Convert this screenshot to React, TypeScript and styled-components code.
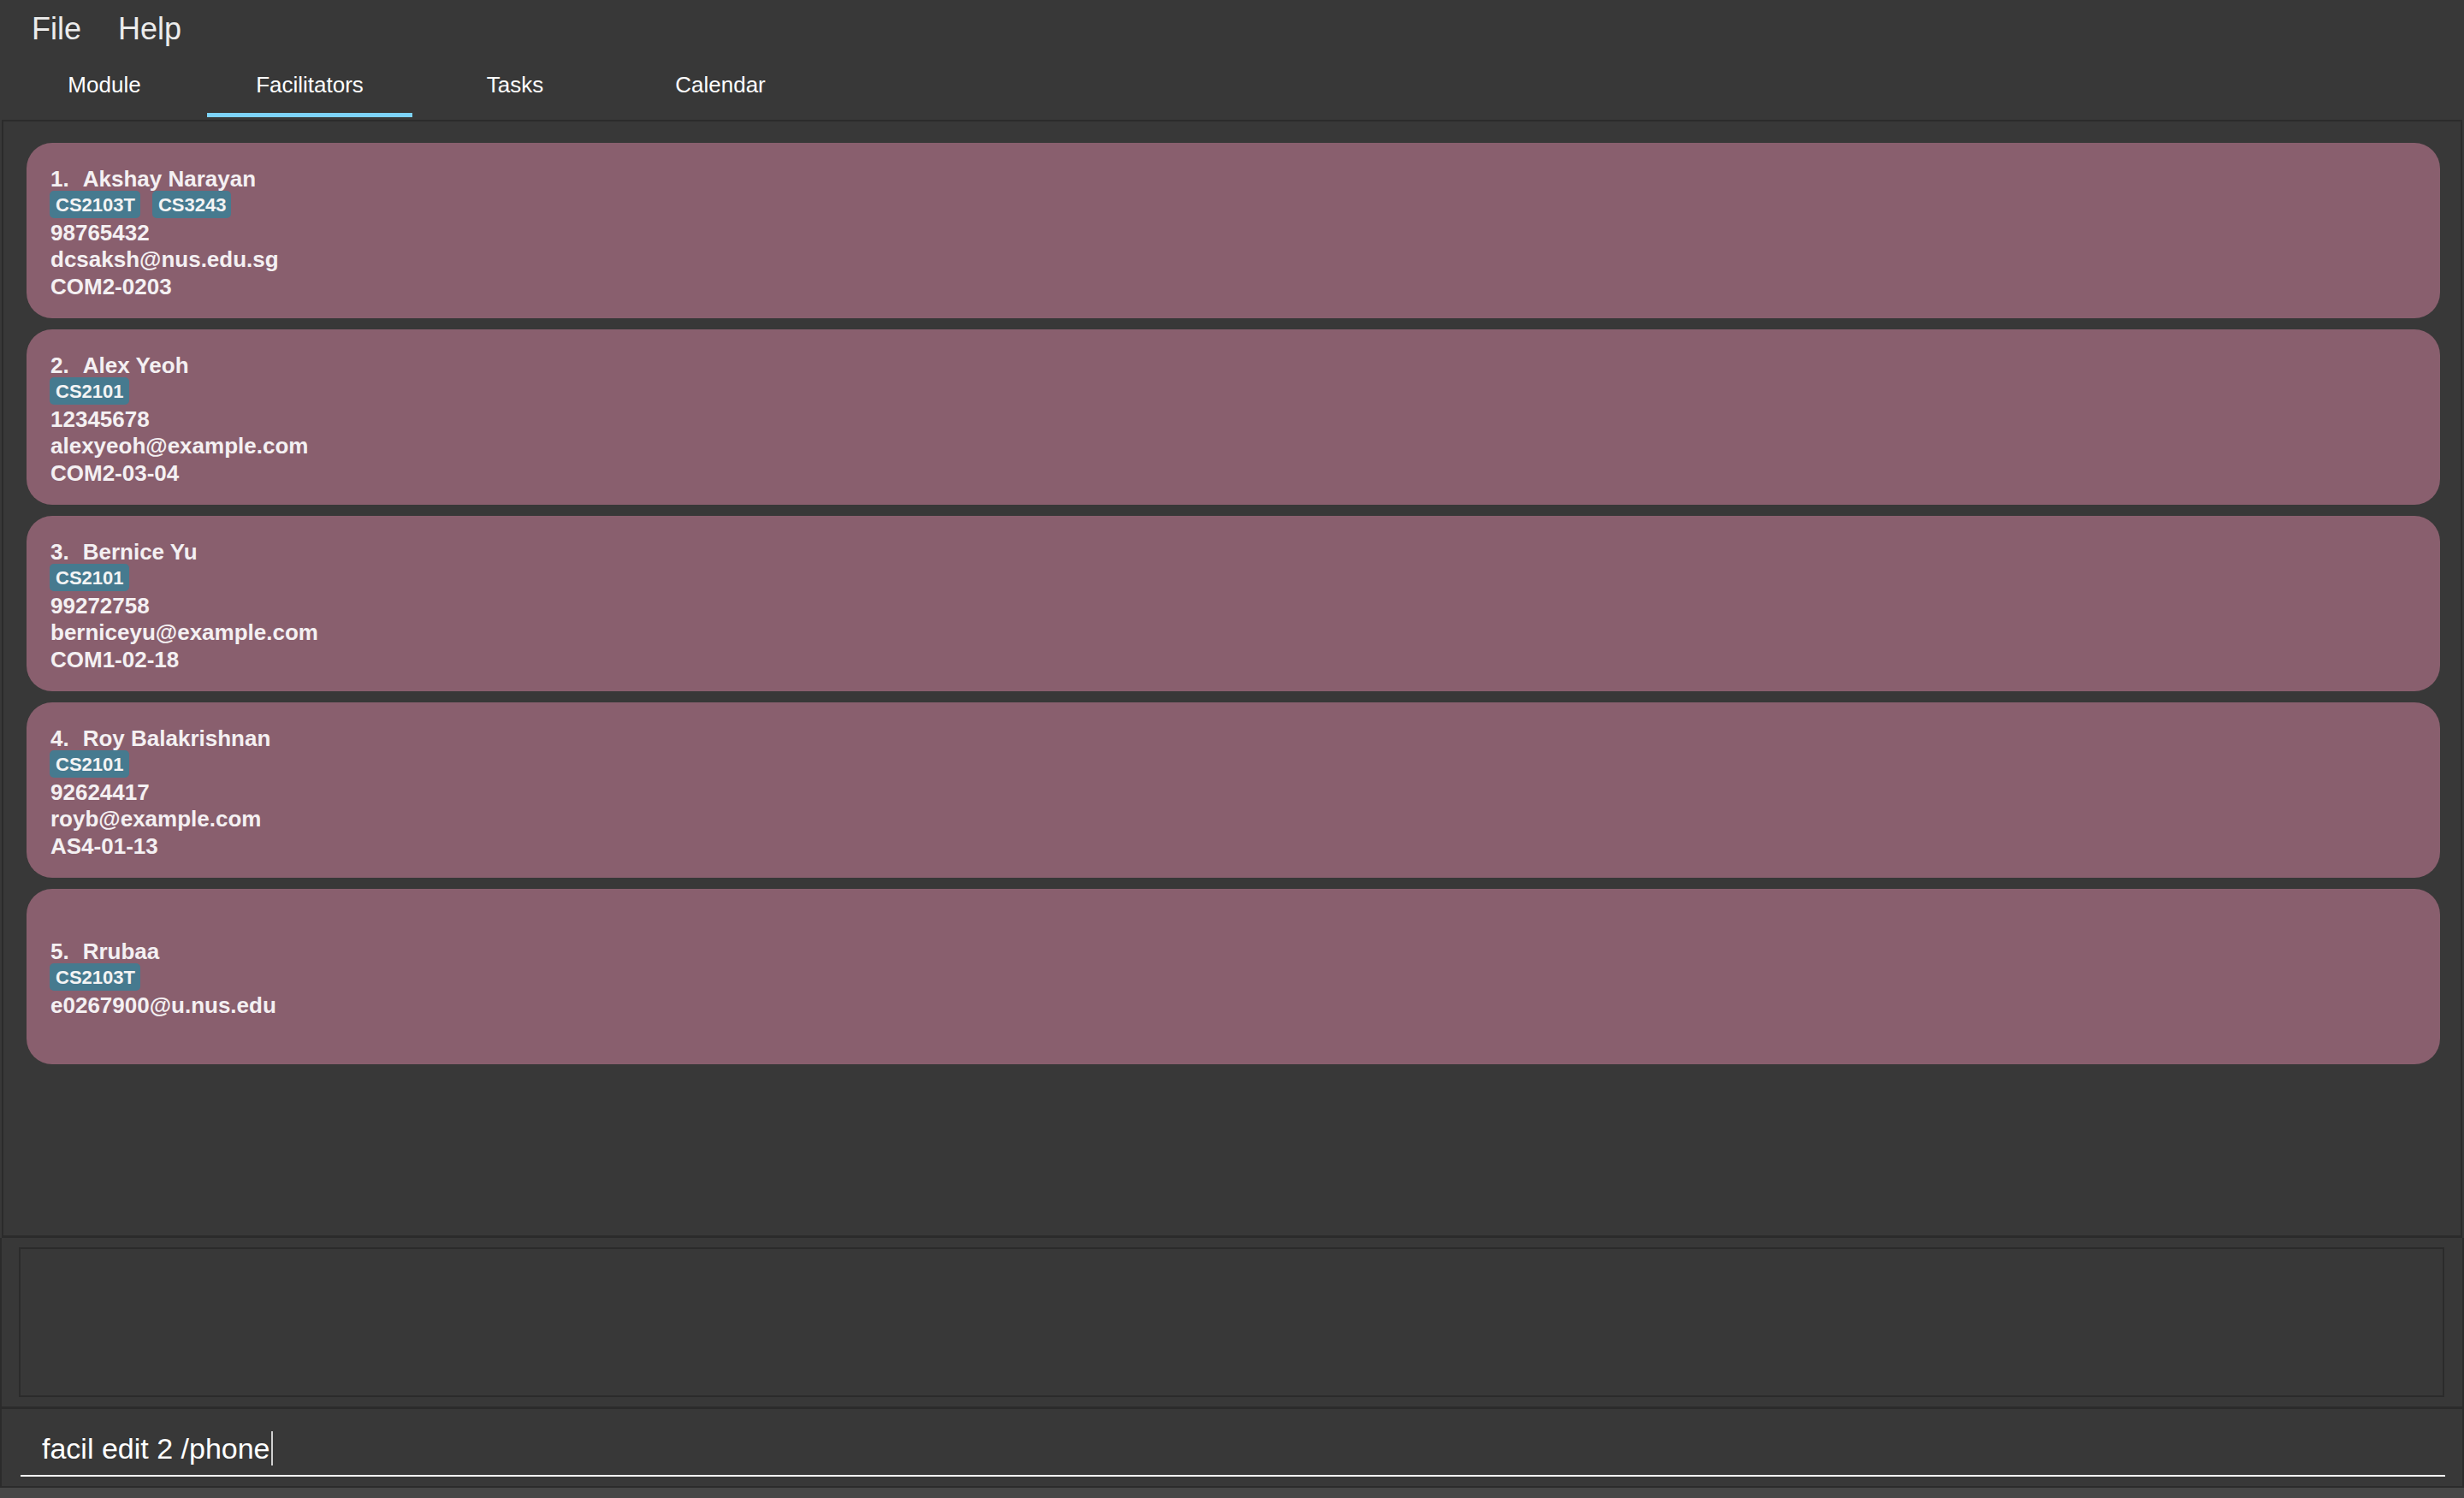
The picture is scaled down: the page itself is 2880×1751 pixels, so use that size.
import React from 'react';
import styled, { createGlobalStyle } from 'styled-components';

const GlobalStyle = createGlobalStyle`
  html, body {
    margin: 0;
    padding: 0;
    background: #383838;
  }
  body {
    font-family: "Liberation Sans", Arial, sans-serif;
  }
  * {
    box-sizing: border-box;
  }
`;

const Window = styled.div`
  width: 100vw;
  height: 100vh;
  display: flex;
  flex-direction: column;
  background: #383838;
  overflow: hidden;
`;

const MenuBar = styled.div`
  height: 68px;
  flex-shrink: 0;
  display: flex;
  align-items: flex-start;
  gap: 43px;
  padding: 13px 0 0 37px;
`;

const MenuItem = styled.span`
  font-size: 36px;
  line-height: 41px;
  color: #ececec;
`;

const TabHeader = styled.div`
  height: 72px;
  flex-shrink: 0;
  display: flex;
  padding-left: 2px;
`;

const Tab = styled.div`
  width: 240px;
  display: flex;
  flex-direction: column;
  align-items: center;
  padding-top: 16px;
`;

const TabLabel = styled.span`
  font-size: 26px;
  line-height: 30px;
  color: #ffffff;
`;

const TabIndicator = styled.div<{ $active?: boolean }>`
  margin-top: auto;
  margin-bottom: 3px;
  width: 100%;
  height: 5px;
  background: ${p => (p.$active ? '#7dd3f8' : 'transparent')};
`;

const ListPanel = styled.div`
  flex: 1;
  margin: 0 2px;
  border: 2px solid #2b2b2b;
  border-bottom-width: 3px;
  padding: 25px 24px 0 27px;
  display: flex;
  flex-direction: column;
  gap: 13px;
  overflow: hidden;
`;

const Card = styled.div`
  height: 205px;
  flex-shrink: 0;
  background: #895f6e;
  border-radius: 30px;
  padding: 7px 28px 0 28px;
  display: flex;
  flex-direction: column;
  justify-content: center;
  color: #f4f0f2;
  font-weight: bold;
  font-size: 26px;
`;

const NameRow = styled.div`
  display: flex;
  gap: 16px;
  line-height: 28px;
`;

const TagRow = styled.div`
  display: flex;
  gap: 14px;
  margin-left: -1px;
  height: 32px;
`;

const Tag = styled.span`
  height: 32px;
  padding: 2px 6px 0 7px;
  line-height: 30px;
  font-size: 22px;
  font-weight: bold;
  color: #f4f4f4;
  background: #467a8f;
  border-radius: 5px;
`;

const Details = styled.div`
  margin-top: 2px;
  display: flex;
  flex-direction: column;
`;

const Detail = styled.span`
  line-height: 31.5px;
`;

const ResultPanel = styled.div`
  height: 200px;
  flex-shrink: 0;
  border: solid #2b2b2b;
  border-width: 0 2px 3px 2px;
  padding: 11px 21px 11px 20px;
`;

const ResultBox = styled.div`
  height: 100%;
  border: 2px solid #2b2b2b;
  background: #383838;
`;

const CommandPanel = styled.div`
  height: 92px;
  flex-shrink: 0;
  border: solid #2b2b2b;
  border-width: 0 2px 2px 2px;
  padding: 26px 20px 0 22px;
`;

const CommandField = styled.div`
  display: flex;
  align-items: center;
  border-bottom: 2px solid #ffffff;
  padding: 0 0 11px 25px;
  font-size: 34px;
  line-height: 40px;
  color: #ffffff;
  white-space: pre;
`;

const Caret = styled.span`
  display: inline-block;
  width: 2px;
  height: 40px;
  margin-left: 1px;
  background: #d0d0d0;
`;

const StatusBar = styled.div`
  height: 12px;
  flex-shrink: 0;
  background: #474747;
`;

type Facilitator = {
  name: string;
  modules: string[];
  phone?: string;
  email?: string;
  office?: string;
};

const facilitators: Facilitator[] = [
  { name: 'Akshay Narayan', modules: ['CS2103T', 'CS3243'], phone: '98765432', email: 'dcsaksh@nus.edu.sg', office: 'COM2-0203' },
  { name: 'Alex Yeoh', modules: ['CS2101'], phone: '12345678', email: 'alexyeoh@example.com', office: 'COM2-03-04' },
  { name: 'Bernice Yu', modules: ['CS2101'], phone: '99272758', email: 'berniceyu@example.com', office: 'COM1-02-18' },
  { name: 'Roy Balakrishnan', modules: ['CS2101'], phone: '92624417', email: 'royb@example.com', office: 'AS4-01-13' },
  { name: 'Rrubaa', modules: ['CS2103T'], email: 'e0267900@u.nus.edu' },
];

const tabs = ['Module', 'Facilitators', 'Tasks', 'Calendar'];

export default function App() {
  return (
    <>
      <GlobalStyle />
      <Window>
        <MenuBar>
          <MenuItem>File</MenuItem>
          <MenuItem>Help</MenuItem>
        </MenuBar>

        <TabHeader>
          {tabs.map(t => (
            <Tab key={t}>
              <TabLabel>{t}</TabLabel>
              <TabIndicator $active={t === 'Facilitators'} />
            </Tab>
          ))}
        </TabHeader>

        <ListPanel>
          {facilitators.map((f, i) => (
            <Card key={f.name}>
              <NameRow>
                <span>{i + 1}.</span>
                <span>{f.name}</span>
              </NameRow>
              <TagRow>
                {f.modules.map(m => (
                  <Tag key={m}>{m}</Tag>
                ))}
              </TagRow>
              <Details>
                {f.phone && <Detail>{f.phone}</Detail>}
                {f.email && <Detail>{f.email}</Detail>}
                {f.office && <Detail>{f.office}</Detail>}
              </Details>
            </Card>
          ))}
        </ListPanel>

        <ResultPanel>
          <ResultBox />
        </ResultPanel>

        <CommandPanel>
          <CommandField>
            facil edit 2 /phone
            <Caret />
          </CommandField>
        </CommandPanel>

        <StatusBar />
      </Window>
    </>
  );
}
